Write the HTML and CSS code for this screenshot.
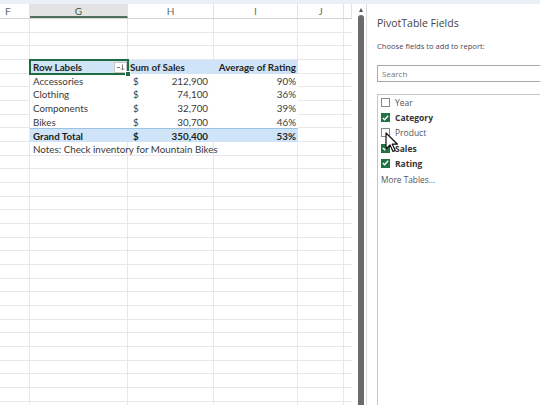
FILE: index.html
```html
<!DOCTYPE html>
<html>
<head>
    <title>PivotTable</title>
    <link rel="stylesheet" href="styles.css">
</head>
<body>
    <div class="sheet">
        <div class="col-heads">
            <div class="col-head first" style="width: 30px">F</div>
            <div class="col-head selected" style="width: 98px">G</div>
            <div class="col-head" style="width: 86px">H</div>
            <div class="col-head" style="width: 84px">I</div>
            <div class="col-head" style="width: 46px">J</div>
            <div class="col-head" style="width: 8px"></div>
        </div>
        <div class="grid">
            <div class="pivot">
                <div class="prow head">
                    <div class="cell label active">Row Labels
                        <span class="filter-btn">
                            <svg width="9" height="7" viewBox="0 0 9 7"><path d="M1 3.5h3M6.5 0.5v5.5M5 4.5l1.5 1.5 1.5-1.5" stroke="#777" fill="none" stroke-width="1"/></svg>
                        </span>
                    </div>
                    <div class="cell">Sum of Sales</div>
                    <div class="cell right">Average of Rating</div>
                </div>
                <div class="prow">
                    <div class="cell label">Accessories</div>
                    <div class="cell money"><span>$</span><span>212,900</span></div>
                    <div class="cell right">90%</div>
                </div>
                <div class="prow">
                    <div class="cell label">Clothing</div>
                    <div class="cell money"><span>$</span><span>74,100</span></div>
                    <div class="cell right">36%</div>
                </div>
                <div class="prow">
                    <div class="cell label">Components</div>
                    <div class="cell money"><span>$</span><span>32,700</span></div>
                    <div class="cell right">39%</div>
                </div>
                <div class="prow">
                    <div class="cell label">Bikes</div>
                    <div class="cell money"><span>$</span><span>30,700</span></div>
                    <div class="cell right">46%</div>
                </div>
                <div class="prow total">
                    <div class="cell label">Grand Total</div>
                    <div class="cell money"><span>$</span><span>350,400</span></div>
                    <div class="cell right">53%</div>
                </div>
                <div class="notes">Notes: Check inventory for Mountain Bikes</div>
            </div>
        </div>
    </div>

    <div class="gutter">
        <div class="scroll-arrow"></div>
        <div class="scroll-thumb"></div>
    </div>

    <div class="panel">
        <div class="panel-title">PivotTable Fields</div>
        <div class="panel-sub">Choose fields to add to report:</div>
        <div class="search">Search</div>
        <div class="field-list">
            <div class="field"><span class="box"></span>Year</div>
            <div class="field on"><span class="box"><svg width="7" height="6" viewBox="0 0 7 6"><path d="M0.8 3l1.8 1.8L6.2 0.8" stroke="#fff" stroke-width="1.3" fill="none"/></svg></span>Category</div>
            <div class="field"><span class="box"></span>Product</div>
            <div class="field on"><span class="box"><svg width="7" height="6" viewBox="0 0 7 6"><path d="M0.8 3l1.8 1.8L6.2 0.8" stroke="#fff" stroke-width="1.3" fill="none"/></svg></span>Sales</div>
            <div class="field on"><span class="box"><svg width="7" height="6" viewBox="0 0 7 6"><path d="M0.8 3l1.8 1.8L6.2 0.8" stroke="#fff" stroke-width="1.3" fill="none"/></svg></span>Rating</div>
            <div class="more">More Tables...</div>
        </div>
    </div>

    <svg class="cursor" width="13" height="21" viewBox="0 0 13 21">
        <path d="M1 1v16l4-4 3 6.5 2.3-1-3-6.3H12.5z" fill="#fff" stroke="#111" stroke-width="1.2" stroke-linejoin="round"/>
    </svg>
</body>
</html>
```

FILE: styles.css
```css
body {
    margin: 0;
    padding-top: 4px;
    height: 401px;
    overflow: hidden;
    display: flex;
    background-color: #eaf0f8;
    font-family: Lato, sans-serif;
    color: #3a3a3a;
}
.sheet {
    width: 352px;
    background: #fff;
    display: flex;
    flex-direction: column;
}
.col-heads {
    display: flex;
    height: 14px;
    border-bottom: 1px solid #d4d4d4;
}
.col-head {
    box-sizing: border-box;
    border-right: 1px solid #e2e2e2;
    font-size: 10px;
    line-height: 14px;
    text-align: center;
    color: #5f6f66;
}
.col-head.first {
    text-align: left;
    padding-left: 5px;
}
.col-head.selected {
    background: #e3e3e3;
    border-bottom: 2px solid #52705e;
    color: #3b5d48;
}
.grid {
    flex: 1;
    padding-top: 41px;
    padding-left: 30px;
    background-color: #fff;
    background-image:
        linear-gradient(#ebe6ec, #ebe6ec),
        linear-gradient(#ebe6ec, #ebe6ec),
        linear-gradient(#ebe6ec, #ebe6ec),
        linear-gradient(#ebe6ec, #ebe6ec),
        linear-gradient(#ebe6ec, #ebe6ec),
        repeating-linear-gradient(to bottom, transparent 0, transparent 12.67px, #ebe6ec 12.67px, #ebe6ec 13.67px);
    background-size: 1px 100%, 1px 100%, 1px 100%, 1px 100%, 1px 100%, 100% 100%;
    background-position: 29px 0, 127px 0, 213px 0, 297px 0, 343px 0, 0 0;
    background-repeat: no-repeat;
}
.pivot {
    width: 268px;
    font-size: 9.8px;
}
.prow {
    display: grid;
    grid-template-columns: 98px 86px 84px;
    height: 13.67px;
    background: #fff;
}
.prow.head, .prow.total {
    background: #cfe5f7;
    font-weight: bold;
    color: #1f1f1f;
}
.prow.total {
    border-top: 1px solid #9cc3e4;
    height: 13px;
}
.cell {
    line-height: 14px;
    padding-left: 2px;
    white-space: nowrap;
}
.cell.label {
    padding-left: 3px;
}
.cell.right {
    text-align: right;
    padding-right: 2px;
}
.cell.money {
    display: flex;
    justify-content: space-between;
    padding-left: 5px;
    padding-right: 6px;
}
.cell.active {
    position: relative;
    outline: 2px solid #1f6b40;
    outline-offset: -1px;
}
.cell.active::after {
    content: "";
    position: absolute;
    right: -3px;
    bottom: -3px;
    width: 4px;
    height: 4px;
    background: #1f6b40;
    border: 1px solid #fff;
}
.filter-btn {
    position: absolute;
    right: 1px;
    top: 2px;
    width: 11px;
    height: 9px;
    background: #fff;
    border: 1px solid #c8c8c8;
    display: flex;
    align-items: center;
    justify-content: center;
}
.notes {
    height: 13.67px;
    line-height: 14px;
    padding-left: 3px;
    white-space: nowrap;
}
.gutter {
    width: 15px;
    background: #fff;
    border-right: 1px solid #dcdcdc;
    box-sizing: border-box;
    display: flex;
    flex-direction: column;
    align-items: center;
    padding-left: 3px;
}
.scroll-arrow {
    margin-top: 4px;
    width: 0;
    height: 0;
    border-left: 2.5px solid transparent;
    border-right: 2.5px solid transparent;
    border-bottom: 4px solid #555;
}
.scroll-thumb {
    margin-top: 3px;
    width: 6px;
    flex: 1;
    background: #6b6b6b;
    border-radius: 3px 3px 0 0;
}
.panel {
    flex: 1;
    background: #fff;
    padding-left: 10px;
    font-family: "Open Sans", sans-serif;
    color: #444;
}
.panel-title {
    font-size: 10.5px;
    line-height: 16px;
    margin-top: 11px;
}
.panel-sub {
    font-size: 7.6px;
    line-height: 11px;
    margin-top: 10px;
    color: #4a3f5a;
}
.search {
    margin-top: 13px;
    height: 15px;
    border: 1px solid #a8a8a8;
    border-right: none;
    font-size: 8px;
    line-height: 15px;
    padding-left: 4px;
    color: #777;
}
.field-list {
    margin-top: 12px;
    height: 320px;
    border: 1px solid #c6c6c6;
    border-right: none;
    border-bottom: none;
    padding-left: 3px;
}
.field {
    display: flex;
    align-items: center;
    height: 15.2px;
    font-size: 8.5px;
    color: #555;
}
.field.on {
    font-weight: bold;
    color: #333;
}
.box {
    box-sizing: border-box;
    width: 9px;
    height: 9px;
    border: 1px solid #8a8a8a;
    margin-right: 5px;
    display: flex;
    align-items: center;
    justify-content: center;
}
.field.on .box {
    background: #217346;
    border-color: #217346;
}
.more {
    font-size: 8.3px;
    margin-top: 3px;
    color: #555;
}
.cursor {
    position: absolute;
    left: 385px;
    top: 132px;
}
```
